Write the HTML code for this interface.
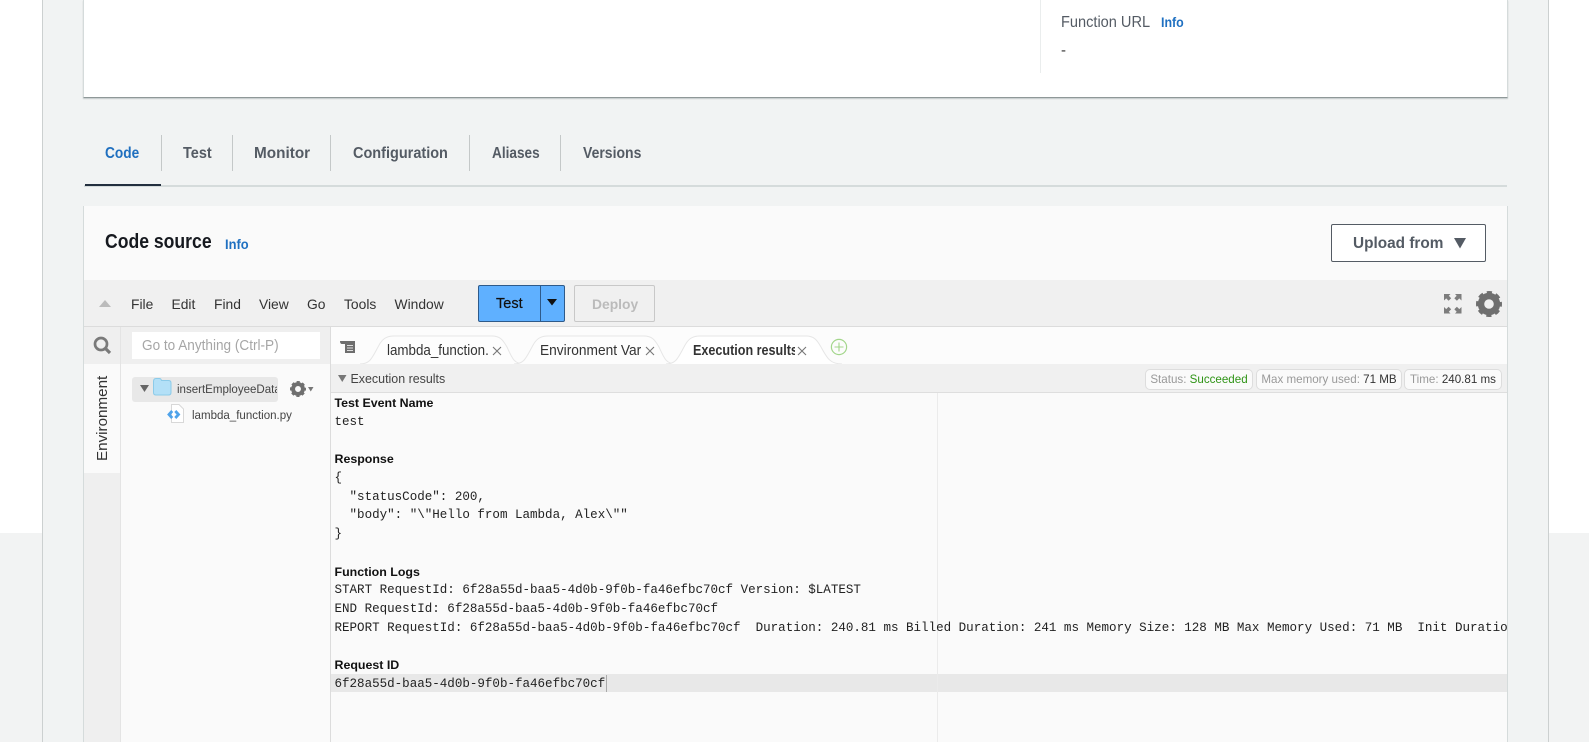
<!DOCTYPE html>
<html><head><meta charset="utf-8"><style>
html,body{margin:0;padding:0;width:1589px;height:742px;overflow:hidden;background:#fff;font-family:"Liberation Sans",sans-serif}
.a{position:absolute;display:block}
.t{position:absolute;white-space:pre;transform-origin:0 50%;line-height:20px}
.tab{font-size:16px;font-weight:700;color:#545b64;transform:scaleX(.905);top:144px}
.m{font-size:13.85px;color:#333;top:294px}
.mono{font:12.54px/18px "Liberation Mono",monospace;color:#222;position:absolute;left:3.5px;white-space:pre}
.b{font-size:12.4px;font-weight:700;color:#111;position:absolute;left:3.5px;white-space:pre;line-height:18px}
.sep{position:absolute;width:1px;top:135px;height:36px;background:#c4c8c8}
.badge{position:absolute;top:369px;height:19px;line-height:19px;border:1px solid #ddd;border-radius:5px;background:#fafafa;font-size:11.6px;color:#999;white-space:pre;text-align:center}
.badge b{font-weight:400;color:#333}
.clip{position:absolute;overflow:hidden;white-space:pre}
.in{display:inline-block;transform-origin:0 50%}
</style></head><body>
<div class="a" style="left:0;top:533px;width:1589px;height:209px;background:#f2f3f3"></div>
<div class="a" style="left:42px;top:0;width:1505px;height:742px;background:#f1f3f3;border-left:1px solid #ccd0d0;border-right:1px solid #ccd0d0"></div>

<!-- top card -->
<div class="a" style="left:83px;top:0;width:1423px;height:97px;background:#fff;border-left:1px solid #d5dbdb;border-right:1px solid #d5dbdb;border-bottom:1px solid #8f9898;box-shadow:0 1px 1px rgba(0,28,36,.2)"></div>
<div class="a" style="left:1040px;top:0;width:1px;height:73px;background:#eaeded"></div>
<span class="t" style="left:1061px;top:12.5px;font-size:15.5px;color:#545b64;transform:scaleX(.94)">Function URL</span>
<span class="t" style="left:1161px;top:12.5px;font-size:13.5px;font-weight:700;color:#1f70c1;transform:scaleX(.92)">Info</span>
<span class="t" style="left:1061px;top:40.5px;font-size:15px;color:#333">-</span>

<!-- tabs -->
<span class="t tab" style="left:105px;color:#1f6fbf;transform:scaleX(.855)">Code</span>
<span class="t tab" style="left:183px">Test</span>
<span class="t tab" style="left:254px;transform:scaleX(.957)">Monitor</span>
<span class="t tab" style="left:353px">Configuration</span>
<span class="t tab" style="left:492px;transform:scaleX(.85)">Aliases</span>
<span class="t tab" style="left:582.5px;transform:scaleX(.875)">Versions</span>
<div class="sep" style="left:161px"></div><div class="sep" style="left:232px"></div><div class="sep" style="left:330px"></div><div class="sep" style="left:469px"></div><div class="sep" style="left:560px"></div>
<div class="a" style="left:84px;top:185px;width:1423px;height:2px;background:#d5dbdb"></div>
<div class="a" style="left:85px;top:184px;width:76px;height:2px;background:#232f3e"></div>

<!-- code source card -->
<div class="a" style="left:83px;top:206px;width:1423px;height:536px;background:#fafafa;border-left:1px solid #d5dbdb;border-right:1px solid #d5dbdb"></div>
<span class="t" style="left:104.5px;top:231.5px;font-size:20px;font-weight:700;color:#16191f;transform:scaleX(.88)">Code source</span>
<span class="t" style="left:224.5px;top:233.5px;font-size:14px;font-weight:700;color:#1f70c1;transform:scaleX(.92)">Info</span>
<div class="a" style="left:1331px;top:224px;width:153px;height:36px;background:#fff;border:1px solid #545b64;border-radius:2px"></div>
<span class="t" style="left:1353px;top:233.5px;font-size:16px;font-weight:700;color:#545b64;transform:scaleX(.96)">Upload from</span>
<svg class="a" style="left:1454px;top:237.5px" width="12" height="11"><path d="M0 0H12L6 10.5Z" fill="#545b64"/></svg>

<!-- toolbar -->
<div class="a" style="left:84px;top:280px;width:1423px;height:46px;background:#f0f0f0;border-bottom:1px solid #dcdcdc"></div>
<svg class="a" style="left:99px;top:299px" width="12" height="8"><path d="M0 8L6 1L12 8Z" fill="#bbb"/></svg>
<span class="t m" style="left:131px;top:293.5px">File</span>
<span class="t m" style="left:171.5px;top:293.5px">Edit</span>
<span class="t m" style="left:214px;top:293.5px">Find</span>
<span class="t m" style="left:259px;top:293.5px">View</span>
<span class="t m" style="left:307px;top:293.5px">Go</span>
<span class="t m" style="left:344px;top:293.5px">Tools</span>
<span class="t m" style="left:394.5px;top:293.5px">Window</span>
<div class="a" style="left:478px;top:285px;width:85px;height:35px;background:#5fb0ff;border:1px solid #2e5a8a;border-radius:2px"></div>
<div class="a" style="left:540px;top:286px;width:1px;height:35px;background:#2e5a8a"></div>
<span class="t" style="left:496px;top:293.5px;font-size:14.5px;color:#111;-webkit-text-stroke:.2px #111">Test</span>
<svg class="a" style="left:547px;top:299px" width="11" height="7"><path d="M0 0H10L5 6.5Z" fill="#111"/></svg>
<div class="a" style="left:574px;top:285px;width:79px;height:35px;border:1px solid #c8c8c8;border-radius:2px"></div>
<span class="t" style="left:592px;top:293.5px;font-size:13.85px;font-weight:700;color:#bbb">Deploy</span>
<svg class="a" style="left:1444px;top:293.5px" width="18" height="20" fill="#7d7d7d"><path d="M0 0H6.5L4.8 1.8L7.2 4.2L4.6 6.8L2.2 4.4L0 6.5Z"/><path d="M17.5 0H11L12.7 1.8L10.3 4.2L12.9 6.8L15.3 4.4L17.5 6.5Z"/><path d="M0 19.5H6.5L4.8 17.7L7.2 15.3L4.6 12.7L2.2 15.1L0 13Z"/><path d="M17.5 19.5H11L12.7 17.7L10.3 15.3L12.9 12.7L15.3 15.1L17.5 13Z"/></svg>
<svg class="a" style="left:1476px;top:290px" width="26" height="28" viewBox="0 0 26 28"><g fill="none" stroke="#6f6f6f"><circle cx="13" cy="14" r="8" stroke-width="6.4"/><circle cx="13" cy="14" r="11.2" stroke-width="3.6" stroke-dasharray="5 3.8" stroke-dashoffset="2.5"/></g></svg>

<!-- left columns -->
<div class="a" style="left:84px;top:327px;width:246px;height:37px;background:#efefef"></div>
<div class="a" style="left:84px;top:473px;width:36px;height:269px;background:#efefef"></div>
<div class="a" style="left:120px;top:327px;width:1px;height:415px;background:#e4e4e4"></div>
<svg class="a" style="left:93px;top:336px" width="19" height="19"><circle cx="8" cy="8" r="6" fill="none" stroke="#7a7a7a" stroke-width="2.7"/><path d="M12.5 12.5L17 17" stroke="#7a7a7a" stroke-width="3.2"/></svg>
<div class="a" style="left:132px;top:332px;width:188px;height:27px;background:#fff"></div>
<span class="t" style="left:142px;top:336px;font-size:14.3px;color:#a6a6a6;transform:scaleX(.95)">Go to Anything (Ctrl-P)</span>
<span class="t" style="left:60.5px;top:409px;width:84px;text-align:center;font-size:15.2px;color:#333;transform:rotate(-90deg);transform-origin:50% 50%;line-height:20px">Environment</span>

<div class="a" style="left:132px;top:377px;width:146px;height:25px;background:#e8e8e8;border-radius:3px"></div>
<svg class="a" style="left:140px;top:384.5px" width="10" height="8"><path d="M0 0H9L4.5 7Z" fill="#666"/></svg>
<svg class="a" style="left:152px;top:377px" width="20" height="19"><path d="M1.5 4.5Q1.5 1.5 4 1.5H7.5Q9 1.5 9.5 3.5H16.5Q19 3.5 19 6V15.5Q19 18 16.5 18H4Q1.5 18 1.5 15.5Z" fill="#b3e0f7" stroke="#8ccbe9"/></svg>
<div class="clip" style="left:177px;top:379px;width:100px;height:20px;line-height:20px;font-size:12.4px;color:#444"><span class="in" style="transform:scaleX(.93)">insertEmployeeData</span></div>
<svg class="a" style="left:290px;top:381px" width="16" height="16" viewBox="0 0 26 26"><g fill="none" stroke="#6f6f6f"><circle cx="13" cy="13" r="8" stroke-width="6.4"/><circle cx="13" cy="13" r="11.2" stroke-width="3.6" stroke-dasharray="5 3.8" stroke-dashoffset="2.5"/></g></svg>
<svg class="a" style="left:308px;top:387px" width="6" height="5"><path d="M0 0H5.5L2.75 4.5Z" fill="#777"/></svg>
<svg class="a" style="left:166px;top:403px" width="19" height="21"><path d="M5.5 1.5H13L17.5 6V19.5H5.5Z" fill="#fff" stroke="#d8d8d8"/><path d="M6.2 8L3 11.5L6.2 15M9.3 8L12.5 11.5L9.3 15" fill="none" stroke="#4fa3ea" stroke-width="2.8"/></svg>
<span class="t" style="left:192px;top:404.5px;font-size:12.4px;color:#444;transform:scaleX(.93)">lambda_function.py</span>

<!-- right pane -->
<div class="a" style="left:330px;top:327px;width:1177px;height:415px;background:#fafafa;border-left:1px solid #dcdcdc;box-sizing:border-box"></div>
<div class="a" style="left:331px;top:327px;width:1176px;height:37px;background:#fcfcfc"></div>
<svg class="a" style="left:340px;top:340px" width="17" height="14"><path d="M0 1H15V13H5V4H2Q0 4 0 1Z" fill="#6e6e6e"/><path d="M7 5.5H13M7 8H13M7 10.5H13" stroke="#ddd"/></svg>
<svg class="a" style="left:360px;top:334px" width="490" height="31" fill="none"><path d="M0 30C10 30 12 24 18 13C22 5 26 2 34 2H132C140 2 143 6 147 13C152 24 154 30 164 30" stroke="#e6e6e6" fill="#fdfdfd"/><path d="M154 30C164 30 166 24 172 13C176 5 180 2 188 2H284C292 2 295 6 299 13C304 24 306 30 316 30" stroke="#e6e6e6" fill="#fdfdfd"/><path d="M306 30C316 30 318 24 324 13C328 5 332 2 340 2H446C454 2 457 6 461 13C467 24 470 30 482 30" stroke="#e6e6e6" fill="#fff"/></svg>
<div class="clip" style="left:387px;top:341px;width:102px;height:20px;line-height:20px;font-size:14.3px;color:#333"><span class="in" style="transform:scaleX(.935)">lambda_function.py</span></div>
<svg class="a" style="left:492px;top:345.5px" width="10" height="10"><path d="M1 1L9 9M9 1L1 9" stroke="#777" stroke-width="1.1"/></svg>
<div class="clip" style="left:540px;top:341px;width:100.5px;height:20px;line-height:20px;font-size:14.3px;color:#333"><span class="in" style="transform:scaleX(.96)">Environment Variables</span></div>
<svg class="a" style="left:645px;top:345.5px" width="10" height="10"><path d="M1 1L9 9M9 1L1 9" stroke="#777" stroke-width="1.1"/></svg>
<div class="clip" style="left:693px;top:341px;width:102px;height:20px;line-height:20px;font-size:14.3px;font-weight:700;color:#333"><span class="in" style="transform:scaleX(.88)">Execution results</span></div>
<svg class="a" style="left:797px;top:345.5px" width="10" height="10"><path d="M1 1L9 9M9 1L1 9" stroke="#777" stroke-width="1.1"/></svg>
<svg class="a" style="left:830px;top:338px" width="18" height="18"><circle cx="9" cy="9" r="7.6" fill="none" stroke="#a3d68b" stroke-width="1.2"/><path d="M9 4.5V13.5M4.5 9H13.5" stroke="#a3d68b" stroke-width="1.1"/></svg>

<div class="a" style="left:331px;top:364px;width:1176px;height:29px;background:#f0f0f0;border-bottom:1px solid #dedede;box-sizing:border-box"></div>
<svg class="a" style="left:338px;top:375px" width="10" height="8"><path d="M0 0H8.5L4.25 7Z" fill="#777"/></svg>
<span class="t" style="left:350.5px;top:369px;font-size:12.45px;color:#444">Execution results</span>
<div class="badge" style="left:1145px;width:106px">Status: <span style="color:#2f9416">Succeeded</span></div>
<div class="badge" style="left:1256px;width:144px">Max memory used: <b>71 MB</b></div>
<div class="badge" style="left:1404px;width:96px">Time: <b>240.81 ms</b></div>

<!-- output -->
<div class="a" style="left:331px;top:674px;width:1176px;height:18px;background:#e8e8e8"></div>
<div class="a" style="left:937px;top:393px;width:1px;height:349px;background:#ebebeb"></div>
<div class="clip" style="left:331px;top:393px;width:1176px;height:349px">
<div class="b" style="top:1px">Test Event Name</div>
<div class="mono" style="top:19.7px">test</div>
<div class="b" style="top:57px">Response</div>
<div class="mono" style="top:75.8px">{</div>
<div class="mono" style="top:94.5px">  "statusCode": 200,</div>
<div class="mono" style="top:113.2px">  "body": "\"Hello from Lambda, Alex\""</div>
<div class="mono" style="top:131.9px">}</div>
<div class="b" style="top:169.5px">Function Logs</div>
<div class="mono" style="top:188.2px">START RequestId: 6f28a55d-baa5-4d0b-9f0b-fa46efbc70cf Version: $LATEST</div>
<div class="mono" style="top:206.9px">END RequestId: 6f28a55d-baa5-4d0b-9f0b-fa46efbc70cf</div>
<div class="mono" style="top:225.6px">REPORT RequestId: 6f28a55d-baa5-4d0b-9f0b-fa46efbc70cf  Duration: 240.81 ms Billed Duration: 241 ms Memory Size: 128 MB Max Memory Used: 71 MB  Init Duration: 115.63 ms</div>
<div class="b" style="top:263px">Request ID</div>
<div class="mono" style="top:281.7px">6f28a55d-baa5-4d0b-9f0b-fa46efbc70cf</div>
</div>
<div class="a" style="left:605.5px;top:675px;width:1px;height:17px;background:#aaa"></div>
</body></html>
